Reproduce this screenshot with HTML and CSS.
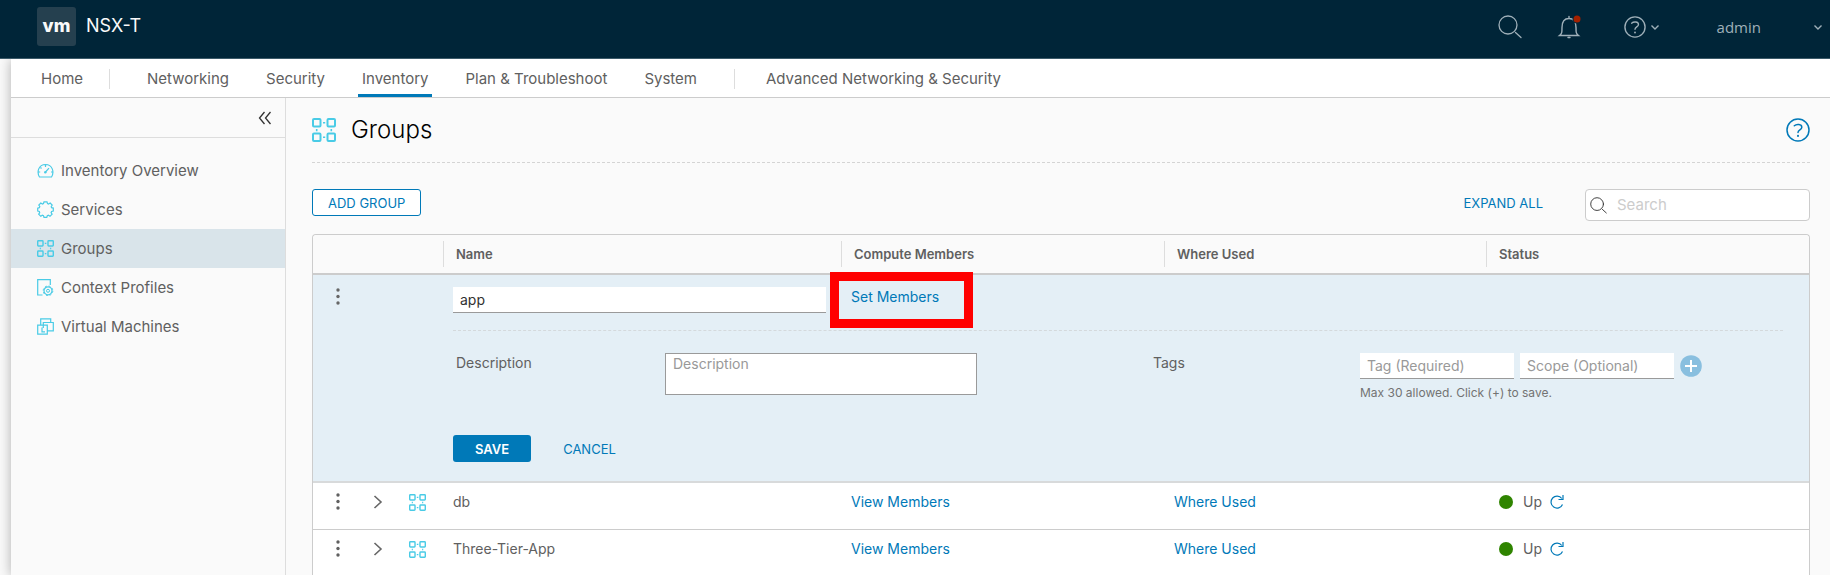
FILE: index.html
```
<!DOCTYPE html>
<html lang="en">
<head>
<meta charset="utf-8">
<title>NSX-T - Groups</title>
<link rel="stylesheet" href="styles.css">
</head>
<body>
<svg class="sprite" aria-hidden="true">
  <symbol id="i-groups" viewBox="0 0 24 24">
    <g fill="none" stroke="currentColor" stroke-width="2">
      <rect x="1" y="1" width="7.5" height="7.5" rx="1"/><rect x="15.500" y="1" width="7.5" height="7.5" rx="1"/>
      <rect x="1" y="15.500" width="7.5" height="7.5" rx="1"/><rect x="15.500" y="15.500" width="7.5" height="7.5" rx="1"/>
      <path d="M11 4.700h2.200M11 19.300h2.200M4.700 11v2.200M19.300 11v2.200" stroke-width="1.600"/>
    </g>
  </symbol>
  <symbol id="i-search" viewBox="0 0 24 24">
    <g fill="none" stroke="currentColor" stroke-width="1.300" stroke-linecap="round"><circle cx="10" cy="10" r="9"/><path d="M17.500 17.500l5.500 5"/></g>
  </symbol>
  <symbol id="i-help" viewBox="0 0 24 24">
    <g fill="none" stroke="currentColor" stroke-width="1.500" stroke-linecap="round"><circle cx="12" cy="12" r="11"/><path d="M8.300 7.800C10.500 5.800 15.800 6 15.800 9.200c0 2.800-3.800 2.600-3.800 5.300"/><path d="M12 17.800v.2" stroke-width="2"/></g>
  </symbol>
  <symbol id="i-down" viewBox="0 0 10 10">
    <path d="M1.500 3.500L5 7l3.500-3.500" fill="none" stroke="currentColor" stroke-width="1.400"/>
  </symbol>
  <symbol id="i-dots" viewBox="0 0 6 20">
    <g fill="currentColor"><circle cx="3" cy="3" r="1.700"/><circle cx="3" cy="9.500" r="1.700"/><circle cx="3" cy="16" r="1.700"/></g>
  </symbol>
  <symbol id="i-right" viewBox="0 0 10 16">
    <path d="M1.500 2L8 8l-6.500 6" fill="none" stroke="currentColor" stroke-width="1.600"/>
  </symbol>
  <symbol id="i-refresh" viewBox="0 0 16 16">
    <path d="M13.500 10.500A6 6 0 1 1 12.800 4.500M14 1v4.500H9.500" fill="none" stroke="currentColor" stroke-width="1.200"/>
  </symbol>
</svg>

<header class="topbar">
  <div class="brand"><span class="brand-logo">vm</span><span class="brand-name">NSX-T</span></div>
  <div class="tools">
    <button class="tool" aria-label="Search"><svg class="icon-24"><use href="#i-search"/></svg></button>
    <button class="tool" aria-label="Notifications"><svg class="icon-24" viewBox="0 0 24 24">
      <path d="M2.500 20.500h19c-2.500-2-2.500-3-2.500-8 0-6-3-9-7-9s-7 3-7 9c0 5 0 6-2.500 8zM12 3.500V1.500M11 22.500h2" fill="none" stroke="currentColor" stroke-width="1.400" stroke-linecap="round"/>
      <circle cx="20" cy="4" r="4.500" fill="#002538"/><circle cx="20" cy="4" r="3.500" fill="#a32100"/></svg></button>
    <button class="tool help-menu" aria-label="Help"><svg class="icon-22"><use href="#i-help"/></svg><svg class="icon-10"><use href="#i-down"/></svg></button>
    <button class="tool user-menu"><span>admin</span><svg class="icon-10"><use href="#i-down"/></svg></button>
  </div>
</header>

<div class="shell">
  <nav class="tabs" aria-label="Primary">
    <a class="tab tab-home" href="#">Home</a>
    <a class="tab" href="#">Networking</a>
    <a class="tab" href="#">Security</a>
    <a class="tab tab-active" href="#">Inventory</a>
    <a class="tab" href="#">Plan &amp; Troubleshoot</a>
    <a class="tab" href="#">System</a>
    <a class="tab tab-advanced" href="#">Advanced Networking &amp; Security</a>
  </nav>

  <div class="body">
    <aside class="sidebar">
      <div class="collapse"><button class="plain" aria-label="Collapse"><svg class="icon-14" viewBox="0 0 14 14"><path d="M6.500 1L1.500 7l5 6M12.500 1l-5 6 5 6" fill="none" stroke="#313131" stroke-width="1.300"/></svg></button></div>
      <nav class="side-nav" aria-label="Inventory">
        <a class="side-link" href="#"><svg class="icon-17" viewBox="0 0 17 17"><path d="M2.500 15h12c3-5 1-12.500-6-12.500S-.500 10 2.500 15zM8.500 10l3.500-3.800M8.500 3v2M1.500 10h1.700M14 10h1.700M3.500 5.500l1 1" fill="none" stroke="currentColor" stroke-width="1.200"/><circle cx="8.300" cy="10.200" r="1.200" fill="currentColor"/></svg>Inventory Overview</a>
        <a class="side-link" href="#"><svg class="icon-17" viewBox="0 0 17 17"><path d="M7 .8h3l.5 1.800 1 .4 1.700-1 2 2-1 1.700.4 1 1.700.4v2.900l-1.700.5-.5 1.200 1 1.500-2.100 2.100-1.600-1-1.100.5-.5 1.500H7l-.5-1.500-1.200-.5-1.500 1-2.100-2.100 1-1.500-.4-1.200L.7 10V7.100l1.600-.4.5-1.200-1-1.500 2-2 1.600 1 1.100-.5z" fill="none" stroke="currentColor" stroke-width="1.200"/></svg>Services</a>
        <a class="side-link side-link-active" href="#"><svg class="icon-17"><use href="#i-groups"/></svg>Groups</a>
        <a class="side-link" href="#"><svg class="icon-17" viewBox="0 0 17 17"><path d="M5.500 16H.7V.7h12.600V6" fill="none" stroke="currentColor" stroke-width="1.200"/><circle cx="11" cy="11.800" r="4" fill="none" stroke="currentColor" stroke-width="1.200"/><circle cx="11" cy="11.800" r="4.800" fill="none" stroke="currentColor" stroke-dasharray="1.900 1.870"/><circle cx="11" cy="11.800" r="1.500" fill="none" stroke="currentColor"/></svg>Context Profiles</a>
        <a class="side-link" href="#"><svg class="icon-17" viewBox="0 0 17 17"><path d="M.7 7.200h9.600v9H.7zM3.700 7V.8h10v3.500M6.300 10V4.500h10v8.300h-6M5 9.500v4.300h3" fill="none" stroke="currentColor" stroke-width="1.200"/></svg>Virtual Machines</a>
      </nav>
    </aside>

    <main class="main">
      <div class="heading">
        <svg class="icon-24 accent"><use href="#i-groups"/></svg>
        <h1 class="title">Groups</h1>
        <button class="plain page-help" aria-label="Page help"><svg class="icon-24"><use href="#i-help"/></svg></button>
      </div>

      <div class="toolbar">
        <button class="btn btn-outline">ADD GROUP</button>
        <button class="btn btn-link expand">EXPAND ALL</button>
        <label class="search"><svg class="icon-17"><use href="#i-search"/></svg><input class="search-input" type="search" placeholder="Search" aria-label="Search groups"></label>
      </div>

      <table class="grid">
        <colgroup><col class="c-actions"><col class="c-name"><col class="c-members"><col class="c-used"><col></colgroup>
        <thead>
          <tr><th aria-label="Actions"></th><th><span class="head">Name</span></th><th><span class="head">Compute Members</span></th><th><span class="head">Where Used</span></th><th><span class="head">Status</span></th></tr>
        </thead>
        <tbody>
          <tr class="edit-row">
            <td><div class="actions"><button class="plain muted" aria-label="Row actions"><svg class="icon-dots"><use href="#i-dots"/></svg></button></div></td>
            <td><input class="line-input name-input" type="text" value="app" aria-label="Name"></td>
            <td><div class="members"><a class="link" href="#">Set Members</a><span class="highlight"></span></div></td>
            <td></td><td></td>
          </tr>
          <tr class="form-row">
            <td></td>
            <td colspan="4">
              <form class="form">
                <div class="fields">
                  <label class="label" for="desc">Description</label>
                  <textarea class="desc" id="desc" placeholder="Description"></textarea>
                  <label class="label tags-label" for="tag">Tags</label>
                  <div class="tags">
                    <div class="tag-line">
                      <input class="line-input" id="tag" type="text" placeholder="Tag (Required)">
                      <input class="line-input" type="text" placeholder="Scope (Optional)" aria-label="Scope">
                      <button class="plain" type="button" aria-label="Add tag"><svg class="icon-22" viewBox="0 0 22 22"><circle cx="11" cy="11" r="10.800" fill="#89bfdf"/><path d="M11 5v12M5 11h12" stroke="#fff" stroke-width="2"/></svg></button>
                    </div>
                    <p class="hint">Max 30 allowed. Click (+) to save.</p>
                  </div>
                </div>
                <div class="buttons"><button class="btn btn-solid" type="button">SAVE</button><button class="btn btn-link" type="button">CANCEL</button></div>
              </form>
            </td>
          </tr>
          <tr class="row">
            <td><div class="actions"><button class="plain" aria-label="Row actions"><svg class="icon-dots"><use href="#i-dots"/></svg></button><button class="plain muted" aria-label="Expand"><svg class="icon-right"><use href="#i-right"/></svg></button><svg class="icon-17 accent"><use href="#i-groups"/></svg></div></td>
            <td>db</td>
            <td><a class="link" href="#">View Members</a></td>
            <td><a class="link" href="#">Where Used</a></td>
            <td><div class="status"><span class="dot"></span>Up<button class="plain refresh" aria-label="Refresh"><svg class="icon-16"><use href="#i-refresh"/></svg></button></div></td>
          </tr>
          <tr class="row">
            <td><div class="actions"><button class="plain" aria-label="Row actions"><svg class="icon-dots"><use href="#i-dots"/></svg></button><button class="plain muted" aria-label="Expand"><svg class="icon-right"><use href="#i-right"/></svg></button><svg class="icon-17 accent"><use href="#i-groups"/></svg></div></td>
            <td>Three-Tier-App</td>
            <td><a class="link" href="#">View Members</a></td>
            <td><a class="link" href="#">Where Used</a></td>
            <td><div class="status"><span class="dot"></span>Up<button class="plain refresh" aria-label="Refresh"><svg class="icon-16"><use href="#i-refresh"/></svg></button></div></td>
          </tr>
        </tbody>
      </table>
    </main>
  </div>
</div>
</body>
</html>
```

FILE: styles.css
```
* { box-sizing: border-box; }
body {
  margin: 0;
  min-height: 100vh;
  display: flex;
  flex-direction: column;
  background: #fafafa;
  color: #606060;
  font: 400 14px/20px Inter, "Open Sans", sans-serif;
}
button, input, textarea { font: inherit; color: inherit; }
a { text-decoration: none; color: inherit; }
svg { display: block; flex: none; }
.sprite { position: absolute; width: 0; height: 0; }
.icon-10 { width: 10px; height: 10px; }
.icon-14 { width: 14px; height: 14px; }
.icon-16 { width: 16px; height: 16px; }
.icon-17 { width: 17px; height: 17px; }
.icon-22 { width: 22px; height: 22px; }
.icon-24 { width: 24px; height: 24px; }
.icon-dots { width: 6px; height: 20px; }
.icon-right { width: 10px; height: 16px; }
.accent { color: #49cbe6; }
.plain { padding: 0; border: 0; background: none; }
.muted { color: #666; }
.link { color: #0079b8; }

/* Top bar */
.topbar {
  display: flex;
  justify-content: space-between;
  height: 59px;
  padding: 7px 7px 12px 37px;
  background: #002538;
  border-bottom: 1px solid #3b5a69;
}
.brand { display: flex; align-items: center; gap: 10px; color: #fafafa; }
.brand-logo {
  width: 39px;
  height: 39px;
  border-radius: 3px;
  background: #25404f;
  font-size: 18px;
  font-weight: 800;
  line-height: 37px;
  text-align: center;
}
.brand-name { font-size: 18px; line-height: 24px; padding-bottom: 2px; }
.tools { display: flex; align-items: center; color: #9fb0b9; }
.tool { display: flex; align-items: center; padding: 0; margin-left: 35px; border: 0; background: none; }
.help-menu { gap: 4px; margin-left: 43px; }
.user-menu { gap: 52px; margin-left: 57px; font-family: "Open Sans", sans-serif; font-size: 15px; }

/* Primary tabs */
.shell {
  flex: 1;
  display: flex;
  flex-direction: column;
  margin-left: 11px;
  box-shadow: 0 0 12px rgba(0, 0, 0, 0.3);
  clip-path: inset(0 0 0 -11px);
  background: #fafafa;
}
.tabs {
  display: flex;
  gap: 29px;
  height: 39px;
  padding-left: 26px;
  background: #fff;
  border-bottom: 1px solid #ccc;
  font-size: 15px;
}
.tab { padding: 10px 4px 0; white-space: nowrap; }
.tab-active { border-bottom: 3px solid #0079b8; }
.tab-home::after, .tab-advanced::before {
  content: "";
  display: inline-block;
  width: 1px;
  height: 20px;
  background: #ddd;
  vertical-align: top;
}
.tab-home::after { margin-left: 26px; }
.tab-advanced::before { margin-right: 31px; }

/* Sidebar */
.body { flex: 1; display: flex; }
.sidebar { flex: none; width: 275px; border-right: 1px solid #ddd; }
.collapse {
  display: flex;
  justify-content: flex-end;
  align-items: center;
  height: 40px;
  padding-right: 13px;
  border-bottom: 1px solid #ddd;
}
.side-nav { padding-top: 13px; }
.side-link {
  display: flex;
  align-items: center;
  gap: 7px;
  height: 39px;
  padding-left: 26px;
  font-size: 15px;
}
.side-link svg { color: #49cbe6; }
.side-link-active { background: #d9e4ea; }

/* Page */
.main { flex: 1; min-width: 0; padding: 0 20px 0 26px; }
.heading {
  display: flex;
  align-items: center;
  gap: 15px;
  height: 65px;
  border-bottom: 1px dashed #d4d4d4;
}
.title { margin: 0; color: #000; font-size: 24px; font-weight: 300; line-height: 32px; }
.page-help { margin-left: auto; color: #0079b8; }
.toolbar { display: flex; align-items: flex-start; padding: 26px 0 13px; }
.btn { height: 27px; padding: 0 15px; border: 1px solid transparent; border-radius: 3px; font-size: 13px; line-height: 24px; }
.btn-outline { border-color: #0079b8; background: #fff; color: #0079b8; }
.btn-solid { padding: 0 21px; background: #0079b8; color: #fff; font-weight: 600; }
.btn-link { background: none; color: #0079b8; }
.expand { margin-left: auto; }
.search {
  display: flex;
  align-items: center;
  gap: 10px;
  width: 225px;
  height: 32px;
  margin-left: 26px;
  padding: 0 4px;
  border: 1px solid #ccc;
  border-radius: 4px;
  background: #fff;
  color: #313131;
}
.search-input { flex: 1; min-width: 0; padding: 0; border: 0; outline: 0; background: none; font-size: 15px; }
.search-input::placeholder { color: #ccc; }

/* Groups table */
.grid {
  width: 100%;
  table-layout: fixed;
  border: 1px solid #ccc;
  border-bottom: 0;
  border-radius: 4px 4px 0 0;
  border-spacing: 0;
  background: #fff;
}
.c-actions { width: 130px; }
.c-name { width: 398px; }
.c-members { width: 323px; }
.c-used { width: 322px; }
.grid th { height: 40px; padding: 0; border-bottom: 2px solid #ccc; background: #fafafa; text-align: left; font-size: 13px; font-weight: 600; line-height: 26px; }
.grid th:first-child { border-top-left-radius: 4px; }
.grid th:last-child { border-top-right-radius: 4px; }
.head { display: block; padding-left: 12px; border-left: 1px solid #ddd; }
.grid td { padding: 0 0 0 10px; vertical-align: top; }
.actions { display: flex; align-items: center; gap: 32px; padding-left: 12px; }
.actions .icon-17 { margin-left: -6px; }
.edit-row td, .form-row td { background: #e4eff6; }
.edit-row td { height: 55px; padding-top: 12px; }
.form-row td { border-bottom: 2px solid #d8dadb; }
.line-input {
  width: 154px;
  height: 26px;
  padding: 0 7px;
  border: 0;
  border-bottom: 1px solid #9a9a9a;
  border-radius: 0;
  background: #fff;
}
.name-input { width: 373px; color: #313131; }
.line-input::placeholder, .desc::placeholder { color: #999; }
.members { position: relative; width: max-content; }
.highlight { position: absolute; inset: -15px -34px -21px -21px; border: 9px solid #f00; pointer-events: none; }
.form { margin-right: 26px; border-top: 1px dashed #d4d9dc; }
.fields { display: grid; grid-template-columns: 212px 312px 383px 1fr; align-items: start; padding-top: 22px; }
.label { padding-left: 3px; }
.tags-label { padding-left: 176px; }
.desc { display: block; height: 42px; padding: 0 7px; border: 1px solid #9a9a9a; background: #fff; resize: none; line-height: 20px; }
.tag-line { display: flex; align-items: center; gap: 6px; }
.hint { margin: 4px 0 0; color: #737373; font-size: 12px; }
.buttons { display: flex; gap: 16px; padding: 32px 0 19px; }
.row td { height: 47px; padding-top: 9px; border-bottom: 1px solid #ccc; }
.row:last-child td { height: 46px; border-bottom: 0; }
.status { display: flex; align-items: center; padding-left: 3px; }
.dot { width: 14px; height: 14px; margin-right: 10px; border-radius: 50%; background: #2f8400; }
.refresh { margin-left: 7px; color: #0079b8; }
```
